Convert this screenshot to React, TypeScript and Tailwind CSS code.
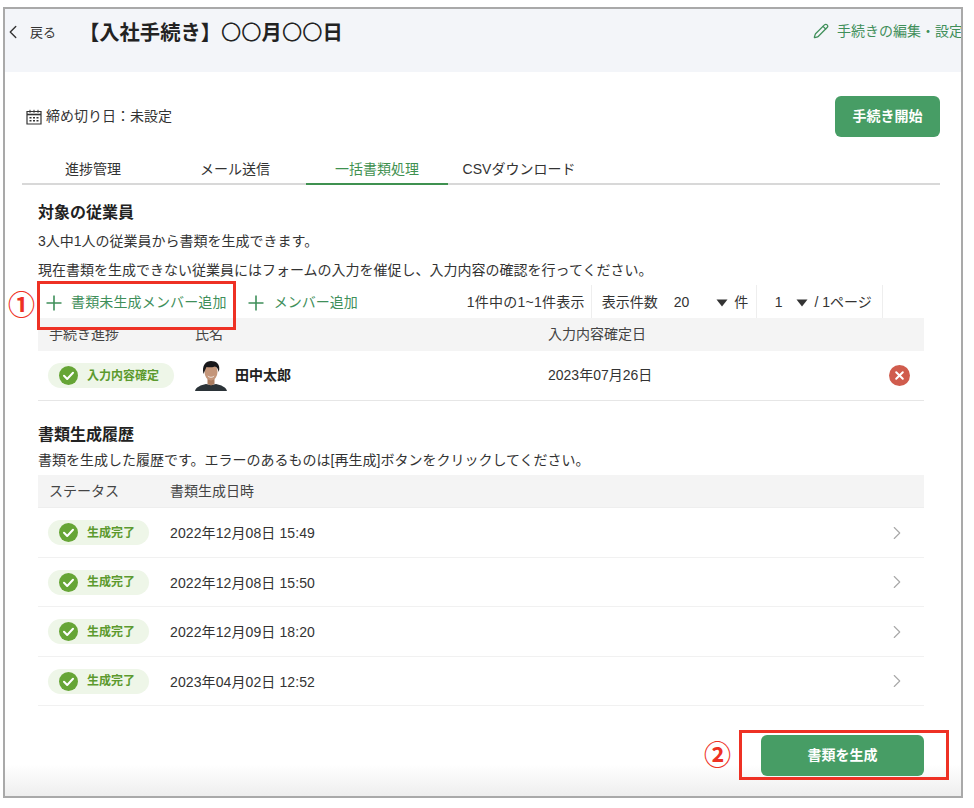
import React from 'react';
import { ChevronLeft, ChevronRight, Pencil } from 'lucide-react';

const CheckDot = () => (
  <svg width="19" height="19" viewBox="0 0 19 19" className="shrink-0">
    <circle cx="9.5" cy="9.5" r="9.5" fill="#66a536" />
    <path d="M5 9.8l3.2 3.2L14 6.8" fill="none" stroke="#fff" strokeWidth="2" strokeLinecap="round" strokeLinejoin="round" />
  </svg>
);

const PlusIcon = () => (
  <svg width="16" height="16" viewBox="0 0 16 16" className="shrink-0">
    <path d="M8 0.5v15M0.5 8h15" stroke="#3f8f5a" strokeWidth="1.6" />
  </svg>
);

const CalendarIcon = () => (
  <svg width="16" height="16" viewBox="0 0 16 16" className="shrink-0 text-[#333]">
    <path d="M1 2.5h14v12.5H1z" fill="none" stroke="currentColor" strokeWidth="1.2" />
    <path d="M1 5.5h14" stroke="currentColor" strokeWidth="1.6" />
    <path d="M4 0.8v3M8 0.8v3M12 0.8v3" stroke="currentColor" strokeWidth="1" />
    <path d="M3.5 8h2v1.5h-2zM7 8h2v1.5H7zM10.5 8h2v1.5h-2zM3.5 11h2v1.5h-2zM7 11h2v1.5H7zM10.5 11h2v1.5h-2z" fill="currentColor" />
  </svg>
);

const Caret = () => (
  <svg width="12" height="8" viewBox="0 0 12 8" className="shrink-0">
    <path d="M0.5 0.5h11L6 7.5z" fill="#333" />
  </svg>
);

const Avatar = () => (
  <svg width="32" height="30" viewBox="0 0 32 30" className="shrink-0">
    <path d="M0 30c1-4 6-6 11-7l5 1 5-1c5 1 10 3 11 7z" fill="#2b3338" />
    <path d="M12.5 17h7v6l-3.5 1.5-3.5-1.5z" fill="#a97b5e" />
    <ellipse cx="16" cy="11" rx="6.5" ry="8.5" fill="#c4967a" />
    <path d="M8.5 13C6.5 4 11 0 16 0s10 3 7.8 11c-.8-3-1.8-5-3.8-5.5-3 1-6.5 1-8.5.5-1 2-2 4.5-3 7z" fill="#17171a" />
    <path d="M12.5 14.5c2 1.8 5 1.8 7 0-1 3-6 3-7 0z" fill="#f3ece6" />
  </svg>
);

const StatusPill = ({ label, width }: { label: string; width: string }) => (
  <span className={`flex h-[25px] items-center gap-[9px] rounded-full bg-[#eef6e8] pl-[11px] text-[12px] font-bold text-[#5c9a2e] ${width}`}>
    <CheckDot />
    {label}
  </span>
);

const historyRows = [
  { date: '2022年12月08日 15:49', height: 'h-[50px]' },
  { date: '2022年12月08日 15:50', height: 'h-[49px]' },
  { date: '2022年12月09日 18:20', height: 'h-[50px]' },
  { date: '2023年04月02日 12:52', height: 'h-[49px]' },
];

const tabs = ['進捗管理', 'メール送信', '一括書類処理', 'CSVダウンロード'];

export default function App() {
  return (
    <div className="h-[808px] w-[974px] bg-white pl-[3px] pt-[7px] text-[14px] text-[#333] [font-family:'Liberation_Sans','Noto_Sans_CJK_JP',sans-serif]">
      <div className="relative h-[791px] w-[960px] overflow-hidden border-2 border-[#a9a9a9] bg-gradient-to-b from-white from-[96%] to-[#eeeeee]">
        {/* ヘッダー */}
        <div className="flex h-[63px] items-start whitespace-nowrap bg-[#f3f5f9]">
          <div className="flex h-[46px] w-full items-center">
            <ChevronLeft size={22} strokeWidth={1.5} className="ml-[-3px] shrink-0 text-[#333]" />
            <span className="ml-[6px] mt-[2px] text-[13px]">戻る</span>
            <h1 className="ml-[23px] mt-[2px] text-[20.3px] font-bold text-[#222]">
              【入社手続き】<span className="font-normal">〇〇</span>月<span className="font-normal">〇〇</span>日
            </h1>
            <div className="mb-[2px] ml-auto flex items-center text-[#3f8f5a]">
              <Pencil size={16} strokeWidth={1.9} className="shrink-0" />
              <span className="ml-[8px] mr-[-2px] w-[126px]">手続きの編集・設定</span>
            </div>
          </div>
        </div>

        <div className="pl-[17px] pr-[21px]">
          {/* 締め切り日 */}
          <div className="mt-[24px] flex h-[41px] items-center justify-between">
            <div className="flex items-center gap-[4px] pl-[4px]">
              <CalendarIcon />
              <span>締め切り日：未設定</span>
            </div>
            <button className="h-[41px] w-[105px] rounded-[6px] bg-[#479d65] font-bold text-white">手続き開始</button>
          </div>

          {/* タブ */}
          <div className="mt-[16px] flex h-[32px] border-b-2 border-[#d8d8d8]">
            {tabs.map((tab) => (
              <div
                key={tab}
                className={`mb-[-2px] flex w-[142px] items-center justify-center border-b-2 pt-[2px] ${
                  tab === '一括書類処理' ? 'border-[#3f9150] text-[#3f9150]' : 'border-transparent'
                }`}
              >
                {tab}
              </div>
            ))}
          </div>

          <div className="px-[16px]">
            {/* 対象の従業員 */}
            <h2 className="mt-[16px] text-[16px] font-bold leading-[24px] text-[#222]">対象の従業員</h2>
            <p className="mt-[6px] leading-[20px]">3人中1人の従業員から書類を生成できます。</p>
            <p className="mt-[9px] leading-[20px]">現在書類を生成できない従業員にはフォームの入力を催促し、入力内容の確認を行ってください。</p>

            <div className="mt-[5px] flex h-[33px] items-center whitespace-nowrap">
              <div className="flex items-center gap-[9px] pl-[8px] pt-[2px] text-[#3f8f5a]">
                <PlusIcon />
                <span className="tracking-[0.15px]">書類未生成メンバー追加</span>
              </div>
              <div className="ml-[21px] flex items-center gap-[10px] pt-[2px] text-[#3f8f5a]">
                <PlusIcon />
                <span>メンバー追加</span>
              </div>
              <div className="ml-[109px] flex h-full w-[125px] items-center border-r border-[#eeeeee] pt-[2px] tracking-[0.25px]">1件中の1~1件表示</div>
              <div className="flex h-full w-[165px] items-center border-r border-[#eeeeee] pl-[10px] pt-[2px]">
                <span>表示件数</span>
                <span className="ml-[16px]">20</span>
                <span className="ml-[27px]"><Caret /></span>
                <span className="ml-[6px]">件</span>
              </div>
              <div className="flex h-full w-[126px] items-center border-r border-[#eeeeee] pl-[18px] pt-[2px]">
                <span>1</span>
                <span className="ml-[14px]"><Caret /></span>
                <span className="ml-[6px]">/ 1ページ</span>
              </div>
            </div>

            <div className="grid h-[33px] grid-cols-[157px_353px_1fr] items-center bg-[#f4f4f4] text-[#444]">
              <span className="pl-[11px]">手続き進捗</span>
              <span>氏名</span>
              <span>入力内容確定日</span>
            </div>
            <div className="grid h-[50px] grid-cols-[157px_353px_1fr] items-center border-b border-[#e6e6e6]">
              <div className="pl-[10px]">
                <StatusPill label="入力内容確定" width="w-[126px]" />
              </div>
              <div className="flex items-center gap-[8px]">
                <Avatar />
                <span className="font-bold text-[#222]">田中太郎</span>
              </div>
              <div className="flex items-center justify-between pr-[14px]">
                <span>2023年07月26日</span>
                <svg width="21" height="21" viewBox="0 0 21 21">
                  <circle cx="10.5" cy="10.5" r="10.5" fill="#d05c4d" />
                  <path d="M7.2 7.2l6.6 6.6M13.8 7.2l-6.6 6.6" stroke="#fff" strokeWidth="2" strokeLinecap="round" />
                </svg>
              </div>
            </div>

            {/* 書類生成履歴 */}
            <h2 className="mt-[22px] text-[16px] font-bold leading-[24px] text-[#222]">書類生成履歴</h2>
            <p className="mt-[3px] leading-[20px]">書類を生成した履歴です。エラーのあるものは[再生成]ボタンをクリックしてください。</p>

            <div className="mt-[5px] grid h-[33px] grid-cols-[132px_1fr] items-center border-b border-[#eeeeee] bg-[#f4f4f4] text-[#444]">
              <span className="pl-[11px]">ステータス</span>
              <span>書類生成日時</span>
            </div>
            {historyRows.map((row) => (
              <div key={row.date} className={`grid grid-cols-[132px_1fr_auto] items-center border-b border-[#f1f1f1] pr-[16px] ${row.height}`}>
                <div className="pl-[10px]">
                  <StatusPill label="生成完了" width="w-[101px]" />
                </div>
                <span className="pt-[2px] tracking-[0.1px]">{row.date}</span>
                <ChevronRight size={22} strokeWidth={1.2} className="text-[#a8a8a8]" />
              </div>
            ))}

            <div className="mt-[29px] flex justify-end">
              <button className="h-[41px] w-[163px] rounded-[6px] bg-[#479d65] font-bold text-white">書類を生成</button>
            </div>
          </div>
        </div>

        {/* 注釈 */}
        <div className="absolute left-[32px] top-[272px] h-[49px] w-[199px] border-[3px] border-[#ee3124]" />
        <span className="absolute left-[3px] top-[280px] text-[27px] font-bold leading-[34px] text-[#ee3124]">①</span>
        <div className="absolute left-[734px] top-[721px] h-[50px] w-[210px] border-[3px] border-[#ee3124]" />
        <span className="absolute left-[699px] top-[730px] text-[27px] font-bold leading-[34px] text-[#ee3124]">②</span>
      </div>
    </div>
  );
}
